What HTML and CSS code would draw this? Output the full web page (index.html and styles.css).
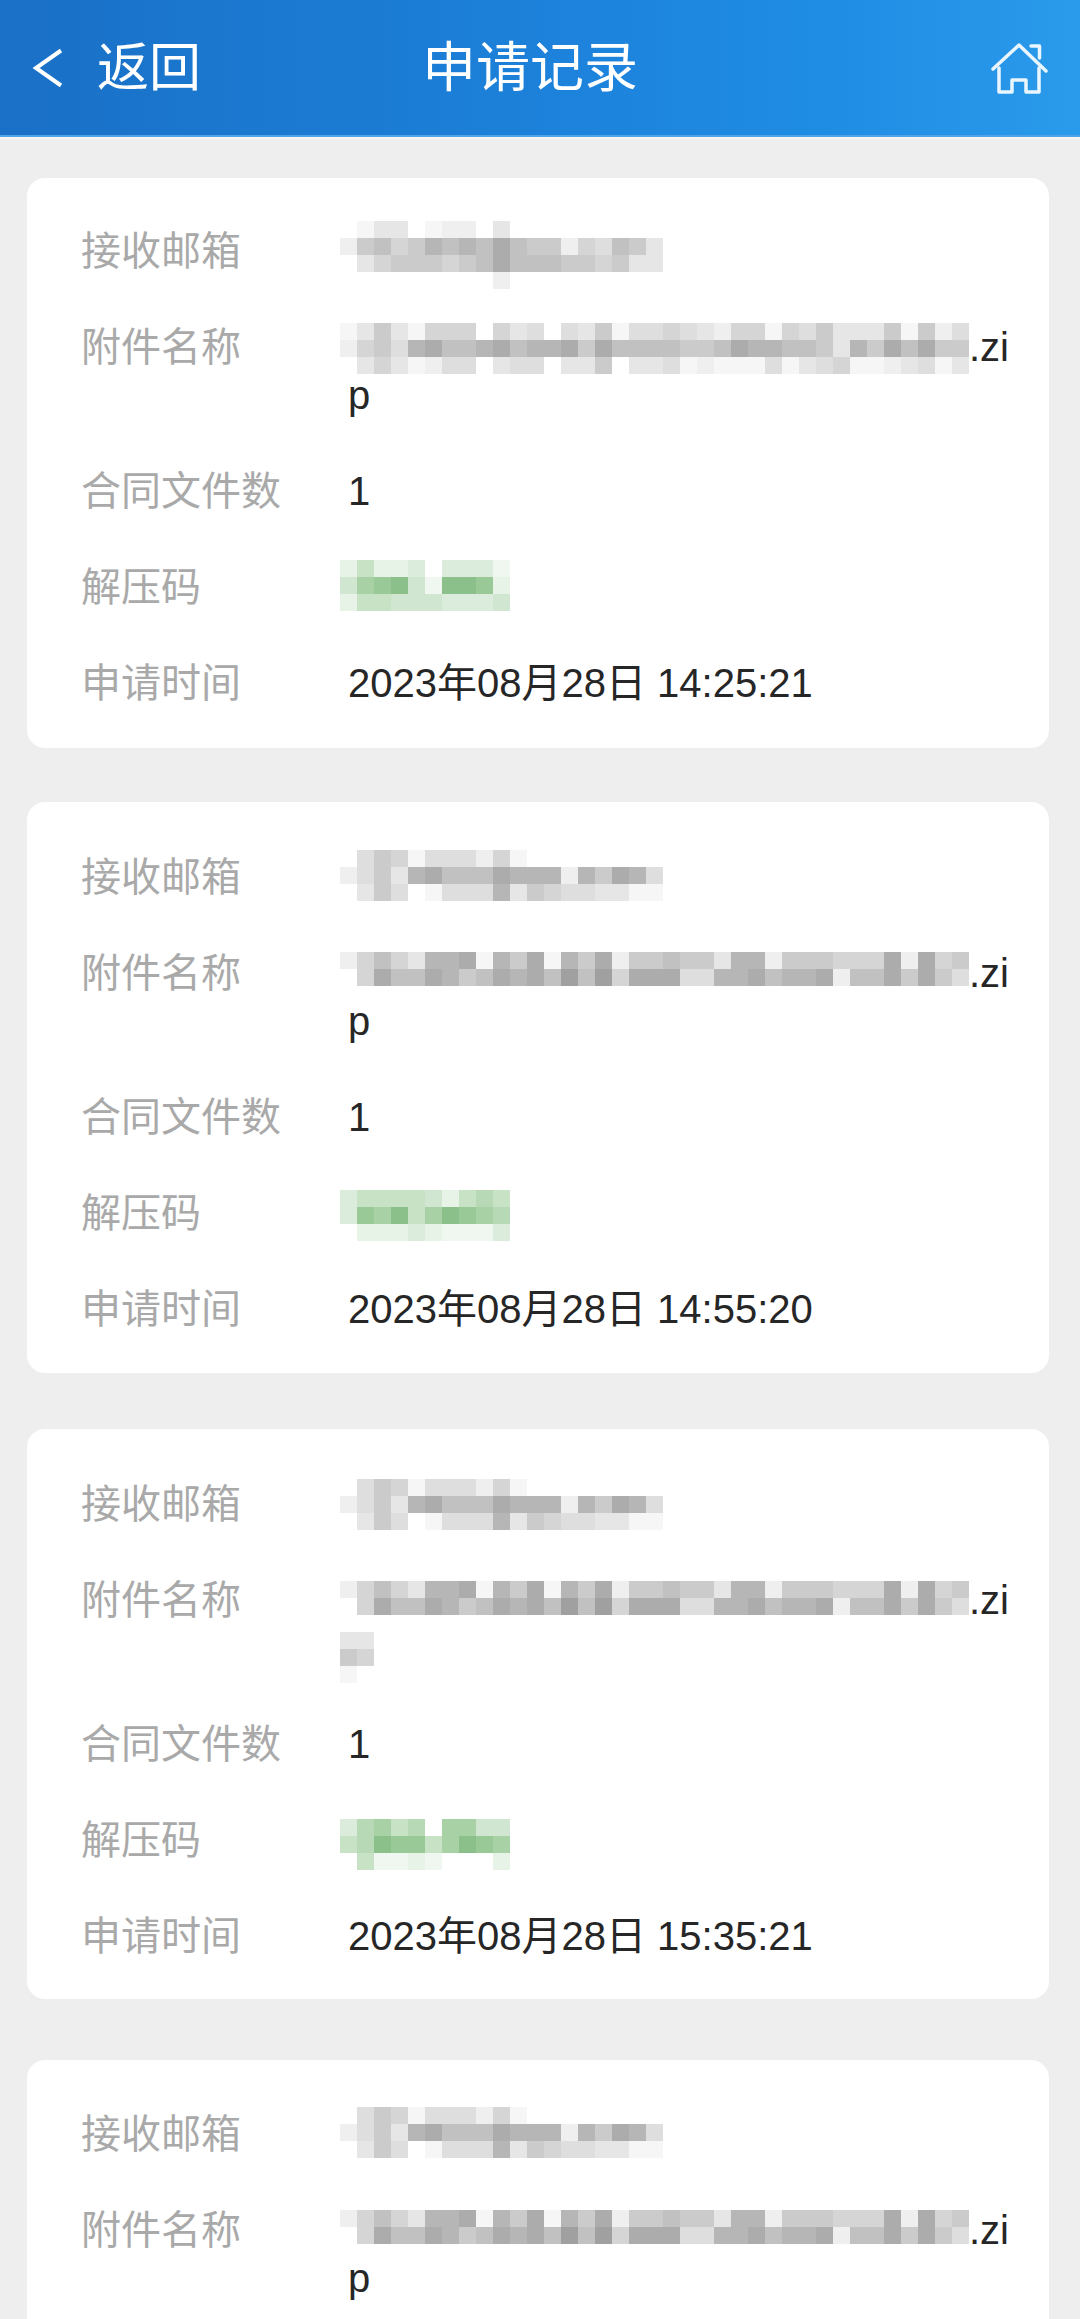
FILE: index.html
```html
<!DOCTYPE html>
<html lang="zh-CN">
<head>
<meta charset="utf-8">
<title>申请记录</title>
<link rel="stylesheet" href="styles.css">
</head>
<body>
<div class="page">
  <header class="topbar">
    <a class="back">
      <svg class="back-icon" viewBox="0 0 32 40" aria-hidden="true"><path d="M29 2.5 4 20l25 17.5"/></svg>
      <span>返回</span>
    </a>
    <h1 class="title">申请记录</h1>
    <svg class="home-icon" viewBox="0 0 60 53" aria-hidden="true">
      <path d="M3 28 29 4l27 26"/>
      <path d="M41 5h8.500v12"/>
      <path d="M9 27v24h13V39h14v12h13V27"/>
    </svg>
  </header>
  <main class="list">
    <section class="card">
      <div class="row"><span class="label">接收邮箱</span><span class="value"><span class="mosaic" data-tone="g" data-drop="24" data-rows="0133012203000000000|2675687879766254763|0356665679777665633|0000000002000000000"></span></span></div>
      <div class="row"><span class="label">附件名称</span><span class="value"><span class="mosaic" data-tone="g" data-drop="13" data-rows="1363155505340436144543255154633361624|2564897789788969777766798877638697966|0353124403440336033412111413451123413"></span>.zip</span></div>
      <div class="row"><span class="label">合同文件数</span><span class="value">1</span></div>
      <div class="row"><span class="label">解压码</span><span class="value"><span class="mosaic" data-tone="v" data-drop="10" data-rows="2522303331|4789419982|2554443334"></span></span></div>
      <div class="row"><span class="label">申请时间</span><span class="value">2023年08月28日 14:25:21</span></div>
    </section>
    <section class="card">
      <div class="row"><span class="label">接收邮箱</span><span class="value"><span class="mosaic" data-tone="g" data-drop="10" data-rows="0465144425100000000|2463897779888286984|0364014448365443311"></span></span></div>
      <div class="row"><span class="label">附件名称</span><span class="value"><span class="mosaic" data-tone="g" data-drop="-1" data-rows="2575388918691869266766388266655592956|0597798679897a7a599944889788927796964"></span>.zip</span></div>
      <div class="row"><span class="label">合同文件数</span><span class="value">1</span></div>
      <div class="row"><span class="label">解压码</span><span class="value"><span class="mosaic" data-tone="v" data-drop="14" data-rows="3555542565|3879579876|0222321113"></span></span></div>
      <div class="row"><span class="label">申请时间</span><span class="value">2023年08月28日 14:55:20</span></div>
    </section>
    <section class="card">
      <div class="row"><span class="label">接收邮箱</span><span class="value"><span class="mosaic" data-tone="g" data-drop="12" data-rows="0465144425100000000|2463897779888286984|0364014448365443311"></span></span></div>
      <div class="row"><span class="label">附件名称</span><span class="value"><span class="mosaic" data-tone="g" data-drop="1" data-rows="2575388918691869266766388266655592956|0597798679897a7a599944889788927796964"></span>.zi<span class="mosaic" data-tone="g" data-drop="21" data-rows="33|65|10"></span></span></div>
      <div class="row"><span class="label">合同文件数</span><span class="value">1</span></div>
      <div class="row"><span class="label">解压码</span><span class="value"><span class="mosaic" data-tone="v" data-drop="16" data-rows="3675607744|5698857987|0511210002"></span></span></div>
      <div class="row"><span class="label">申请时间</span><span class="value">2023年08月28日 15:35:21</span></div>
    </section>
    <section class="card">
      <div class="row"><span class="label">接收邮箱</span><span class="value"><span class="mosaic" data-tone="g" data-drop="10" data-rows="0465144425100000000|2463897779888286984|0364014448365443311"></span></span></div>
      <div class="row"><span class="label">附件名称</span><span class="value"><span class="mosaic" data-tone="g" data-drop="0" data-rows="2575388918691869266766388266655592956|0597798679897a7a599944889788927796964"></span>.zip</span></div>
    </section>
  </main>
</div>
<script src="mosaic.js"></script>
</body>
</html>
```

FILE: styles.css
```css
* { box-sizing: border-box; }
html, body { margin: 0; padding: 0; }
body {
  background: #eeeeee;
  font-family: "Liberation Sans", "Noto Sans CJK SC", sans-serif;
}
.page { height: 2319px; overflow: hidden; }

.topbar {
  height: 137px;
  display: grid;
  grid-template-columns: 390px auto 1fr;
  align-items: center;
  padding: 0 30px 0 32px;
  background: linear-gradient(90deg, #1a70c6 0%, #1c7fd8 45%, #1f8ce4 75%, #2a9aea 100%);
  border-bottom: 2px solid #4fa3e6;
  box-shadow: 0 2px 2px rgba(255, 255, 255, .5);
  color: #fff;
}
.back { display: flex; align-items: center; gap: 33px; font-size: 52px; line-height: 1; }
.back-icon { width: 32px; height: 40px; fill: none; stroke: #fff; stroke-width: 4; }
.title { margin: 0; font-size: 54px; font-weight: 400; line-height: 1; }
.home-icon { justify-self: end; width: 60px; height: 53px; fill: none; stroke: #eaf6ff; stroke-width: 3.5; stroke-linejoin: round; stroke-linecap: round; }

.list { padding: 41px 31px 0 27px; display: flex; flex-direction: column; }
.card {
  background: #fff;
  border-radius: 18px;
  padding: 49px 33px 41px 54px;
  display: flex;
  flex-direction: column;
  gap: 48px;
}
.card:nth-child(1) { margin-bottom: 54px; }
.card:nth-child(2) { margin-bottom: 56px; padding-top: 51px; padding-bottom: 40px; }
.card:nth-child(3) { margin-bottom: 61px; padding-top: 51px; padding-bottom: 39px; }
.card:nth-child(4) { padding-top: 50px; }

.row { display: grid; grid-template-columns: 267px 1fr; font-size: 40px; line-height: 48px; }
.label { color: #a9a9a9; }
.value { color: #262626; word-break: break-all; }

.mosaic {
  display: inline-block;
  overflow: hidden;
  margin-left: -8px;
}
.mosaic-grid {
  display: grid;
  grid-auto-rows: 17px;
  grid-auto-columns: 17px;
}
.cell { display: block; }
.g-0 { background: #fff; } .g-1 { background: #f6f6f6; } .g-2 { background: #efefef; } .g-3 { background: #e6e6e6; }
.g-4 { background: #dedede; } .g-5 { background: #d5d5d5; } .g-6 { background: #cbcbcb; } .g-7 { background: #c1c1c1; }
.g-8 { background: #b6b6b6; } .g-9 { background: #acacac; } .g-a { background: #a0a0a0; }
.v-0 { background: #fff; } .v-1 { background: #f0f7f0; } .v-2 { background: #e6f3e6; } .v-3 { background: #dcecdc; }
.v-4 { background: #d0e6d0; } .v-5 { background: #c8e2c6; } .v-6 { background: #b8d9b6; } .v-7 { background: #a8d2a6; }
.v-8 { background: #98c996; } .v-9 { background: #8cc08a; }
```

FILE: mosaic.js
```js
document.querySelectorAll('.mosaic').forEach(function (box) {
  var rows = box.dataset.rows.split('|');
  var grid = document.createElement('span');
  grid.className = 'mosaic-grid';
  grid.style.gridTemplateColumns = 'repeat(' + rows[0].length + ', 17px)';
  box.style.width = (17 * rows[0].length) + 'px';
  box.style.height = (17 * rows.length) + 'px';
  box.style.marginTop = (-17 * rows.length) + 'px';
  box.style.transform = 'translateY(' + box.dataset.drop + 'px)';
  rows.forEach(function (row) {
    row.split('').forEach(function (shade) {
      var cell = document.createElement('span');
      cell.className = 'cell ' + box.dataset.tone + '-' + shade;
      grid.appendChild(cell);
    });
  });
  box.appendChild(grid);
});
```
